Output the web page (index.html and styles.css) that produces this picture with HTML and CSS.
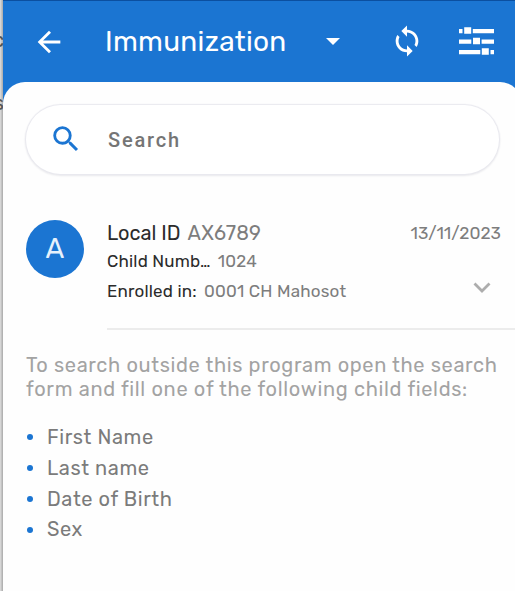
FILE: index.html
```html
<!DOCTYPE html>
<html lang="en">
<head>
<meta charset="utf-8">
<title>Immunization</title>
<link rel="stylesheet" href="styles.css">
</head>
<body>
<div class="behind"><span class="peek peek-top">c</span><span class="peek peek-low">s</span></div>
<main class="app">
  <header class="bar">
    <svg class="back" viewBox="0 0 24 24"><path d="M20 11H7.83l5.59-5.59L12 4l-8 8 8 8 1.41-1.41L7.83 13H20z"/></svg>
    <h1 class="title">Immunization</h1>
    <svg class="caret" viewBox="0 0 14 7"><path d="M0 0h14L7 7z"/></svg>
    <svg class="sync" viewBox="0 0 24 24"><path d="M12 4V1L8 5l4 4V6c3.31 0 6 2.69 6 6 0 1.01-.25 1.97-.7 2.8l1.46 1.46C19.54 15.03 20 13.57 20 12c0-4.42-3.58-8-8-8zm0 14c-3.31 0-6-2.69-6-6 0-1.01.25-1.97.7-2.8L5.24 7.74C4.46 8.97 4 10.43 4 12c0 4.42 3.58 8 8 8v3l4-4-4-4z"/></svg>
    <svg class="filter" viewBox="0 0 35 28"><path d="M0 2h3.5v4.2H0zM5.2.2h7v6.6h-7zM13.8 2H35v4.2H13.8zM0 12.6h12.3v4.2H0zM14 10.7h7v6.6h-7zM22.6 12.6H35v4.2H22.6zM0 23h21.3v4.2H0zM22.8 21.2h7v6.6h-7zM31.5 23H35v4.2h-3.5z"/></svg>
  </header>
  <section class="sheet">
    <div class="search">
      <svg class="lens" viewBox="0 0 24 24"><path d="M15.5 14h-.79l-.28-.27A6.47 6.47 0 0 0 16 9.5 6.5 6.5 0 1 0 9.5 16c1.61 0 3.09-.59 4.23-1.57l.27.28v.79l5 4.99L20.49 19zm-6 0a4.5 4.5 0 1 1 0-9 4.5 4.5 0 0 1 0 9z"/></svg>
      <span class="placeholder">Search</span>
    </div>
    <article class="record">
      <div class="avatar">A</div>
      <div class="details">
        <div class="row first"><span>Local ID</span><span class="value">AX6789</span><time>13/11/2023</time></div>
        <div class="row second"><span>Child Numb…</span><span class="value">1024</span></div>
        <div class="row third"><span>Enrolled in:</span><span class="value">0001 CH Mahosot</span><svg class="chevron" viewBox="0 0 18 11"><path d="M1.5 1.5 9 9l7.5-7.5"/></svg></div>
      </div>
    </article>
    <p class="hint">To search outside this program open the search<br><span class="hint-end">form and fill one of the following child fields:</span></p>
    <ul class="fields">
      <li>First Name</li>
      <li>Last name</li>
      <li>Date of Birth</li>
      <li>Sex</li>
    </ul>
  </section>
</main>
</body>
</html>
```
FILE: styles.css
```css
* { box-sizing: border-box; }
body {
  margin: 0;
  width: 515px;
  height: 591px;
  overflow: hidden;
  display: flex;
  background: #1b75d2;
  font-family: Rubik, Roboto, sans-serif;
  color: #2b2b2b;
}
svg { display: block; flex: none; fill: #fff; }
.behind {
  position: relative;
  flex: none;
  width: 3px;
  height: 591px;
  overflow: hidden;
  background: linear-gradient(90deg, #d6d6d6 0 1px, #b2b2b2 2px);
}
.peek { position: absolute; right: -1px; font-size: 20px; line-height: 20px; color: #555; }
.peek-top { top: 30px; }
.peek-low { top: 93px; }
.app { flex: none; width: 519px; height: 591px; background: #1b75d2; border-top: 1px solid #0b4fa0; }
.bar { display: flex; align-items: center; height: 81px; padding-left: 29px; }
.back { width: 34px; height: 34px; }
.title { margin: 1px 0 0 39px; width: 221px; font-size: 28px; line-height: 40px; font-weight: 400; letter-spacing: .27px; color: #fff; white-space: nowrap; }
.caret { width: 14px; height: 7px; }
.sync { width: 34px; height: 34px; margin: -1px 0 0 50px; }
.filter { width: 35px; height: 28px; margin: -1px 0 0 35px; }
.sheet { height: 510px; padding: 23px 0 0 23px; border-radius: 22px 22px 0 0; background: #fefefe; }
.search {
  display: flex;
  align-items: center;
  width: 473px;
  height: 69px;
  padding-left: 23px;
  border-radius: 35px;
  background: #fff;
  box-shadow: 0 0 1px 1px #e9e9ef, 0 1px 2px 1px #e9e9ec;
}
.lens { width: 34px; height: 34px; margin-top: -1px; }
.lens path { fill: #1b75d2; }
.placeholder { margin: 1px 0 0 25px; font-family: Roboto, sans-serif; font-size: 20px; font-weight: 500; letter-spacing: 1.8px; color: #757575; }
.record { display: flex; gap: 23px; margin-top: 46px; }
.avatar { width: 58px; height: 58px; flex: none; border-radius: 50%; background: #1b75d2; color: #e6f1fc; font-size: 28px; line-height: 58px; text-align: center; }
.details { width: 415px; height: 110px; border-bottom: 2px solid #ececec; white-space: nowrap; }
.row { display: flex; align-items: center; }
.first { height: 25px; font-size: 20px; }
.second { height: 32px; font-size: 17px; letter-spacing: .18px; }
.third { height: 27px; font-size: 17px; letter-spacing: .2px; }
.value, time { color: #7d7d7d; }
.value { margin-left: 7px; }
.first .value { letter-spacing: .2px; }
time { margin: 1px 21px 0 auto; font-size: 17.3px; }
.chevron { width: 18px; height: 11px; margin: -6px 31px 0 auto; fill: none; stroke: #adadad; stroke-width: 2.8; }
.hint { margin: 23px 0 0; font-size: 20px; line-height: 24px; letter-spacing: .64px; color: #a3a3a3; white-space: nowrap; }
.hint-end { letter-spacing: .68px; }
.fields { list-style: none; margin: 21px 0 0; padding: 0; font-size: 20px; line-height: 31px; letter-spacing: .58px; color: #7b7b7b; }
.fields li { display: flex; align-items: center; height: 30.8px; }
.fields li::before { content: ""; width: 6px; height: 6px; margin: 0 14px 0 1px; border-radius: 50%; background: #1b75d2; }
```
